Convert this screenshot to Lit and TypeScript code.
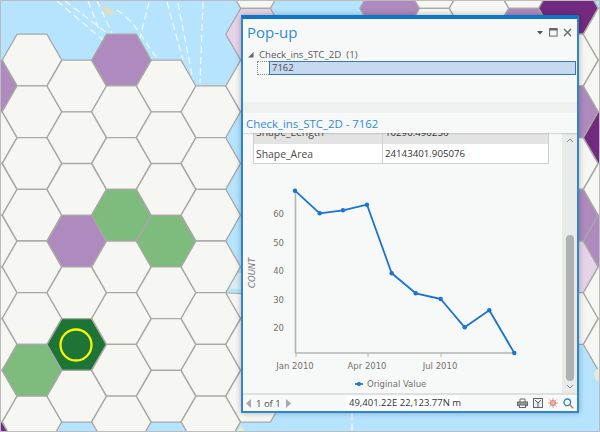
import { LitElement, html, css, svg } from "lit";
import { customElement } from "lit/decorators.js";

const DX = 44.7, DY = 51.7, R = 29.7, H = 25.85;
const W = "#f6f7f2", M = "#ae8abf", D = "#722a80", P = "#e6d3e8", G = "#7dbc7c", DG = "#1c7534";

function hexCells(): [number, number, string][] {
  const cells: [number, number, string][] = [];
  const add = (c: number, from: number, to: number) => {
    for (let k = from; k <= to; k++) cells.push([c, k, W]);
  };
  add(-1, 0, 7);
  add(0, 0, 7);
  add(1, 0, 6);
  add(2, 0, 7);
  add(3, 0, 6);
  add(4, 1, 7);
  add(5, -2, 0);
  add(5, 5, 6);
  add(8, -1, -1);
  add(9, -2, -1);
  add(10, -1, -1);
  add(11, -2, -1);
  add(12, -1, 5);
  add(13, -1, 5);
  const colors: [number, number, string][] = [
    [-1, 0, M], [2, 0, M], [1, 3, M], [2, 3, G], [3, 3, G], [1, 5, DG], [0, 6, G], [-1, 7, D],
    [5, -1, P], [8, -1, M], [11, -1, M], [12, -1, D], [12, 1, M], [13, 1, D], [12, 3, M], [13, 3, M], [12, 4, P],
  ];
  for (const [c, k, col] of colors) {
    const hit = cells.find((x) => x[0] === c && x[1] === k);
    if (hit) hit[2] = col;
    else cells.push([c, k, col]);
  }
  return cells;
}

function hexPoly(c: number, k: number, fill: string) {
  const x = 32 + DX * c;
  const y = (c % 2 === 0 ? 60 : 86) + DY * k;
  const pts = [
    [x - R, y], [x - R / 2, y - H], [x + R / 2, y - H], [x + R, y], [x + R / 2, y + H], [x - R / 2, y + H],
  ].map((p) => p.map((n) => n.toFixed(1)).join(",")).join(" ");
  return svg`<polygon points=${pts} fill=${fill} stroke="#a8a8a6" stroke-width="1.3"/>`;
}

const DASHES = [
  "M57 1L103 40", "M65 1L107 33", "M88 1L100 32", "M97 1L112 33",
  "M117 10Q132 20 143 38T160 60", "M149 2L140 38", "M167 2L183 60", "M178 3L193 80", "M203 2L200 83",
  "M352 413V432",
];

const POINTS: [number, number][] = [
  [295, 189.7], [319.7, 212.3], [343, 209.3], [367, 203.7], [391.7, 272.3],
  [415.7, 292.3], [440.7, 298], [464.7, 326.3], [489.3, 309.3], [514.3, 352],
];
const YLABELS: [string, number][] = [["60", 216], ["50", 245], ["40", 273], ["30", 302], ["20", 330]];
const XLABELS: [string, number][] = [["Jan 2010", 295], ["Apr 2010", 367], ["Jul 2010", 440]];

@customElement("app-root")
export class AppRoot extends LitElement {
  static styles = css`
    :host { display: block; width: 600px; height: 432px; font-family: "Open Sans", "Liberation Sans", sans-serif; }
    .map { position: relative; width: 600px; height: 432px; overflow: hidden; background: #b6e4fe; }
    .map-svg { display: block; }
    .frame { position: absolute; inset: 0; border: 1px solid #bcbcbc; pointer-events: none; }
    .panel {
      position: absolute; left: 241px; top: 15px; width: 338px; height: 398px; box-sizing: border-box;
      display: flex; flex-direction: column; background: #f7f9f9;
      border: 2px solid #2f86cf; border-top: 4px solid #0f74c8;
      box-shadow: 0 0 6px rgba(0, 0, 0, 0.28);
    }
    .head { height: 26px; flex: none; display: flex; align-items: center; justify-content: space-between; padding: 0 5px 0 4px; }
    .head-title { font-size: 15px; color: #2f8ad8; }
    .win { display: flex; align-items: center; gap: 5px; }
    .tree { height: 57px; flex: none; box-sizing: border-box; padding-top: 2px; font-size: 9.7px; color: #595959; }
    .tree-row { height: 14px; display: flex; align-items: center; }
    .tri { width: 7px; height: 7px; margin: 0 5px 0 4px; flex: none; }
    .sel-row { display: flex; height: 14px; margin-left: 14px; margin-right: 1px; }
    .dots { width: 12px; flex: none; box-sizing: border-box; border: 1px dotted #8a8a8a; border-right: none; }
    .sel { flex: 1; box-sizing: border-box; background: #c5daee; border: 1px solid #3b76a8; line-height: 12px; padding-left: 2px; color: #4a4a4a; font-size: 9.5px; }
    .band { height: 11px; flex: none; background: #eff0f0; }
    .sub { height: 20px; flex: none; display: flex; align-items: center; padding-left: 3px; font-size: 11.4px; color: #2f8ad8; background: #f7f9f9; box-shadow: 0 1px 1px rgba(0,0,0,0.12); position: relative; }
    .body { flex: 1; min-height: 0; display: flex; }
    .main { flex: 1; min-width: 0; overflow: hidden; }
    .tbl { margin: -9px 0 0 10px; width: 296px; border: 1px solid #cfcfcf; font-size: 10.4px; color: #4f4a46; box-sizing: border-box; }
    .tr { display: grid; grid-template-columns: 128px 1fr; height: 20px; }
    .tr > div { display: flex; align-items: center; padding-left: 2px; }
    .tr > div + div { border-left: 1px solid #cfcfcf; color: #333; font-size: 9.7px; }
    .alt { background: #e3e3e3; height: 19px; }
    .alt > div { padding-bottom: 6px; box-sizing: border-box; }
    .plain { background: #ffffff; height: 19px; }
    .chart { display: block; }
    .scroll { width: 15px; flex: none; background: #e9eaea; display: flex; flex-direction: column; align-items: center; padding: 5px 0 4px; box-sizing: border-box; }
    .thumb-wrap { flex: 1; display: flex; flex-direction: column; justify-content: flex-end; width: 100%; align-items: center; padding-bottom: 3px; }
    .thumb { width: 8px; height: 146px; background: #b1b1b1; border-radius: 4px; }
    .foot { flex: none; border-top: 2px solid #dedfdf; display: flex; align-items: center; background: #f7f8f8; font-size: 9.5px; color: #4a4a4a; box-sizing: border-box; height: 18px; }
    .pager { display: flex; align-items: center; gap: 5px; padding-left: 3px; width: 103px; box-sizing: border-box; }
    .coords { background: #ffffff; color: #333; padding: 0 0 0 3px; width: 113px; box-sizing: border-box; height: 14px; line-height: 14px; white-space: nowrap; }
    .tools { margin-left: auto; display: flex; align-items: center; gap: 5px; padding-right: 3px; }
    svg text { font-family: "DejaVu Sans", sans-serif; }
  `;

  render() {
    const line = POINTS.map((p) => p.join(",")).join(" ");
    return html`
      <div class="map">
        <svg class="map-svg" width="600" height="432" viewBox="0 0 600 432">
          ${DASHES.map((d) => svg`<path d=${d} fill="none" stroke="#eefaff" stroke-width="1.3" stroke-dasharray="7 4"/>`)}
          <ellipse cx="108" cy="11" rx="7" ry="3.2" transform="rotate(38 108 11)" fill="#dcdfc6"/>
          <polygon points="225.6,292.8 240,318 247,318 247,294" fill="${W}" stroke="#a8a8a6"/>
          <rect x="230" y="273" width="14" height="16" fill="#d9ecf4"/>
          ${hexCells().map(([c, k, col]) => hexPoly(c, k, col))}
          <circle cx="76" cy="345" r="15.5" fill="none" stroke="#f8f40c" stroke-width="2.3"/>
          <ellipse cx="598" cy="375" rx="4" ry="6" fill="#e8e8dc"/>
          <polygon points="237,432 241,425 245,432" fill="#e6eccd"/>
        </svg>
        <div class="frame"></div>
        <div class="panel">
          <div class="head">
            <span class="head-title">Pop-up</span>
            <span class="win">
              <svg width="8" height="5" viewBox="0 0 8 5"><path d="M1 1h6L4 4.5z" fill="#555"/></svg>
              <svg width="9" height="9" viewBox="0 0 9 9"><rect x=".6" y=".6" width="7.5" height="7.5" fill="none" stroke="#666" stroke-width="1"/><path d="M.5 1.5h8" stroke="#666" stroke-width="2"/></svg>
              <svg width="9" height="9" viewBox="0 0 9 9"><path d="M1 1l7 7M8 1L1 8" stroke="#666" stroke-width="1.3"/></svg>
            </span>
          </div>
          <div class="tree">
            <div class="tree-row">
              <svg class="tri" viewBox="0 0 7 7"><path d="M6.5 1v5.5H1z" fill="#666"/></svg>
              <span>Check_ins_STC_2D&nbsp;&nbsp;(1)</span>
            </div>
            <div class="sel-row"><div class="dots"></div><div class="sel">7162</div></div>
          </div>
          <div class="band"></div>
          <div class="sub">Check_ins_STC_2D - 7162</div>
          <div class="body">
            <div class="main">
              <div class="tbl">
                <div class="tr alt"><div>Shape_Length</div><div>10290.490256</div></div>
                <div class="tr plain"><div>Shape_Area</div><div>24143401.905076</div></div>
              </div>
              <svg class="chart" width="320" height="232" viewBox="243 163 320 232">
                <path d="M295.5 190V352M295 352H515" stroke="#b4b4b4" stroke-width="1.6" fill="none"/>
                ${XLABELS.map(([t, x]) => svg`
                  <path d="M${x + 1} 352v4" stroke="#b4b4b4" stroke-width="1"/>
                  <text x=${x} y="368" font-size="8.5" fill="#7a6f68" text-anchor="middle">${t}</text>`)}
                ${YLABELS.map(([t, y]) => svg`<text x="284" y=${y} font-size="8.5" fill="#7a6f68" text-anchor="end">${t}</text>`)}
                <text transform="translate(255 287) rotate(-90)" font-size="8.5" font-style="italic" fill="#777">COUNT</text>
                <polyline points=${line} fill="none" stroke="#1a73d0" stroke-width="1.8" stroke-linejoin="round"/>
                ${POINTS.map(([x, y]) => svg`<circle cx=${x} cy=${y} r="2.2" fill="#1a73d0"/>`)}
                <path d="M355 383h8" stroke="#1a73d0" stroke-width="1.6"/>
                <circle cx="359" cy="383" r="2.1" fill="#1a73d0"/>
                <text x="367" y="386" font-size="8.5" fill="#6f6f6f">Original Value</text>
              </svg>
            </div>
            <div class="scroll">
              <svg width="8" height="5" viewBox="0 0 8 5"><path d="M1 4l3-3 3 3" fill="none" stroke="#888" stroke-width="1"/></svg>
              <div class="thumb-wrap"><div class="thumb"></div></div>
              <svg width="8" height="5" viewBox="0 0 8 5"><path d="M1 1l3 3 3-3" fill="none" stroke="#888" stroke-width="1"/></svg>
            </div>
          </div>
          <div class="foot">
            <div class="pager">
              <svg width="5" height="9" viewBox="0 0 5 9"><path d="M5 0v9L0 4.5z" fill="#a8a8a8"/></svg>
              <span>1 of 1</span>
              <svg width="5" height="9" viewBox="0 0 5 9"><path d="M0 0v9l5-4.5z" fill="#a8a8a8"/></svg>
            </div>
            <div class="coords">49,401.22E 22,123.77N m</div>
            <div class="tools">
              <svg width="11" height="10" viewBox="0 0 11 10"><path d="M3 4V1h5v3" fill="#fff" stroke="#666"/><rect x=".5" y="4" width="10" height="3.6" fill="#999" stroke="#666"/><rect x="2.5" y="7" width="6" height="2.5" fill="#fff" stroke="#666"/></svg>
              <svg width="10" height="10" viewBox="0 0 10 10"><rect x=".5" y=".5" width="9" height="9" fill="#eef1f3" stroke="#666"/><path d="M2 2l3 3 3-3M5 5v4" fill="none" stroke="#555"/></svg>
              <svg width="10" height="10" viewBox="0 0 10 10"><circle cx="5" cy="5" r="2.6" fill="#e9b1a4" stroke="#d9897a"/><path d="M5 0v2M5 8v2M0 5h2M8 5h2M1.5 1.5l1.4 1.4M7.1 7.1l1.4 1.4M8.5 1.5L7.1 2.9M2.9 7.1L1.5 8.5" stroke="#e0a595"/></svg>
              <svg width="11" height="11" viewBox="0 0 11 11"><circle cx="4.3" cy="4.3" r="3.3" fill="#fff" stroke="#2f86cf" stroke-width="1.4"/><path d="M6.8 6.8l3.4 3.4" stroke="#c98a3a" stroke-width="1.6"/></svg>
            </div>
          </div>
        </div>
      </div>
    `;
  }
}
